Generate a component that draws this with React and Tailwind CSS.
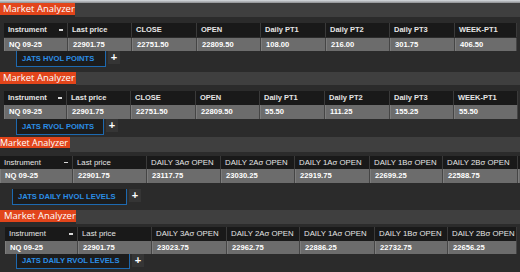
import React from 'react';

const panels = [
    {
        key: 'p1',
        box: 'h-[65px]',
        title: 'pt-[0px]',
        tab: 'h-[12px] w-[75px] pl-[3px] text-[9.5px]',
        band: 'h-[14px]',
        table: 'mt-[6px] ml-[4px]',
        cols: 'grid-cols-[64px_64px_65px_64px_65px_64px_65px_62px]',
        head: 'h-[14px] font-bold',
        gap: 'mt-[1px]',
        data: 'h-[13px]',
        row: 'h-[17px] pl-[16px]',
        jats: 'h-[16px] w-[90px]',
        name: 'JATS HVOL POINTS',
        headers: ['Instrument', 'Last price', 'CLOSE', 'OPEN', 'Daily PT1', 'Daily PT2', 'Daily PT3', 'WEEK-PT1'],
        values: ['NQ 09-25', '22901.75', '22751.50', '22809.50', '108.00', '216.00', '301.75', '406.50'],
    },
    {
        key: 'p2',
        box: 'h-[68px]',
        title: 'pt-[4px]',
        tab: 'h-[12px] w-[76px] pl-[3px] text-[9.5px]',
        band: 'h-[13px]',
        table: 'mt-[6px] ml-[4px]',
        cols: 'grid-cols-[63px_64px_65px_64px_65px_65px_64px_64px]',
        head: 'h-[14px] font-bold',
        gap: 'mt-[0px]',
        data: 'h-[14px]',
        row: 'h-[17px] pl-[16px]',
        jats: 'h-[16px] w-[88px]',
        name: 'JATS RVOL POINTS',
        headers: ['Instrument', 'Last price', 'CLOSE', 'OPEN', 'Daily PT1', 'Daily PT2', 'Daily PT3', 'WEEK-PT1'],
        values: ['NQ 09-25', '22901.75', '22751.50', '22809.50', '55.50', '111.25', '155.25', '55.50'],
    },
    {
        key: 'p3',
        box: 'h-[70px]',
        title: 'pt-[1px]',
        tab: 'h-[11px] w-[70px] pl-[0px] text-[9px]',
        band: 'h-[15px]',
        table: 'mt-[4px] ml-[0px]',
        cols: 'grid-cols-[73px_74px_74px_74px_75px_73px_75px_8px]',
        head: 'h-[13px] font-normal text-[7.8px]',
        gap: 'mt-[0px]',
        data: 'h-[14px]',
        row: 'h-[23px] pl-[12px] pt-[6px]',
        jats: 'h-[16px] w-[115px]',
        name: 'JATS DAILY HVOL LEVELS',
        headers: ['Instrument', 'Last price', 'DAILY 3A\u03c3 OPEN', 'DAILY 2A\u03c3 OPEN', 'DAILY 1A\u03c3 OPEN', 'DAILY 1B\u03c3 OPEN', 'DAILY 2B\u03c3 OPEN', ''],
        values: ['NQ 09-25', '22901.75', '23117.75', '23030.25', '22919.75', '22699.25', '22588.75', ''],
    },
    {
        key: 'p4',
        box: 'h-[66px]',
        title: 'pt-[4px]',
        tab: 'h-[12px] w-[76px] pl-[4px] text-[9.5px]',
        band: 'h-[14px]',
        table: 'mt-[3px] ml-[5px]',
        cols: 'grid-cols-[73px_74px_75px_73px_75px_73px_69px]',
        head: 'h-[14px] font-normal text-[7.8px]',
        gap: 'mt-[0px]',
        data: 'h-[13px]',
        row: 'h-[16px] pl-[16px]',
        jats: 'h-[15px] w-[114px]',
        name: 'JATS DAILY RVOL LEVELS',
        headers: ['Instrument', 'Last price', 'DAILY 3A\u03c3 OPEN', 'DAILY 2A\u03c3 OPEN', 'DAILY 1A\u03c3 OPEN', 'DAILY 1B\u03c3 OPEN', 'DAILY 2B\u03c3 OPEN'],
        values: ['NQ 09-25', '22901.75', '23023.75', '22962.75', '22886.25', '22732.75', '22656.25'],
    },
];

const Panel = ({ p }) => (
    <section className={`flex flex-col bg-[#2b2b2b] overflow-hidden ${p.box}`}>
        {/* Title strip */}
        <div className={`flex items-start ${p.title}`}>
            <div className={`flex items-center bg-[#e2451b] text-white leading-none font-['Open_Sans',sans-serif] whitespace-nowrap ${p.tab}`}>
                Market Analyzer
            </div>
            <div className={`flex-1 bg-[#3f3f3f] ${p.band}`} />
        </div>

        {/* Grid */}
        <div className={`w-max ${p.table}`}>
            <div className={`grid bg-[#191919] text-[#e6e6e6] text-[7.5px] ${p.cols} ${p.head}`}>
                {p.headers.map((h, i) => (
                    <div key={i} className="flex items-center justify-between pl-[4px] pr-[4px] border-r border-[#3a3a3a] whitespace-nowrap overflow-hidden">
                        <span>{h}</span>
                        {i === 0 && <span className="w-[4px] h-[1.5px] bg-[#d8d8d8]" />}
                    </div>
                ))}
            </div>
            <div className={`grid bg-[#6c6c6c] text-white text-[7.6px] font-bold ${p.cols} ${p.gap} ${p.data}`}>
                {p.values.map((v, i) => (
                    <div key={i} className="flex items-center pl-[4px] border-r border-[#454545] border-l border-l-[#7d7d7d] whitespace-nowrap overflow-hidden">
                        {v}
                    </div>
                ))}
            </div>
        </div>

        {/* Tabs */}
        <div className={`flex items-start ${p.row}`}>
            <div className={`flex items-center pl-[5px] bg-[#1c1c1c] border border-t-0 border-[#1d69b0] text-[#2b8ee6] text-[7.6px] font-bold whitespace-nowrap ${p.jats}`}>
                {p.name}
            </div>
            <div className="flex items-center justify-center w-[12px] h-[13px] ml-[2px] bg-[#353535] text-white text-[11px] leading-none font-bold">
                +
            </div>
        </div>
    </section>
);

export default function App() {
    return (
        <div className="w-[520px] h-[272px] overflow-hidden bg-[#2b2b2b] font-['Liberation_Sans',Arial,sans-serif]">
            <div className="h-[3px] bg-gradient-to-b from-[#d9dde2] to-[#8d8f92]" />
            {panels.map((p) => (
                <Panel key={p.key} p={p} />
            ))}
        </div>
    );
}
